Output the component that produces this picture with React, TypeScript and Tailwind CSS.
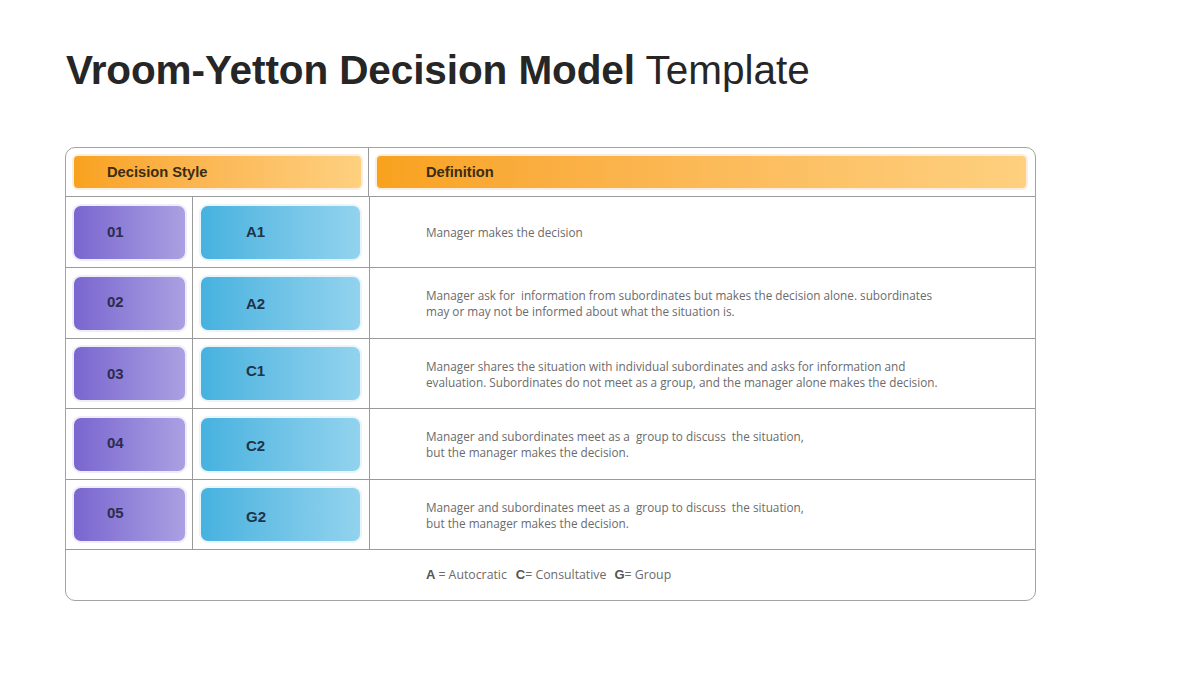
import React from "react";

const rows = [
  { n: "01", c: "A1", nOff: 0, cOff: 0, h: "h-[71px]", text: ["Manager makes the decision"] },
  { n: "02", c: "A2", nOff: -1, cOff: 1, h: "h-[71px]", text: ["Manager ask for  information from subordinates but makes the decision alone. subordinates", "may or may not be informed about what the situation is."] },
  { n: "03", c: "C1", nOff: 1, cOff: -2, h: "h-[70px]", text: ["Manager shares the situation with individual subordinates and asks for information and", "evaluation. Subordinates do not meet as a group, and the manager alone makes the decision."] },
  { n: "04", c: "C2", nOff: -1, cOff: 2, h: "h-[71px]", text: ["Manager and subordinates meet as a  group to discuss  the situation,", "but the manager makes the decision."] },
  { n: "05", c: "G2", nOff: -1, cOff: 3, h: "h-[70px]", text: ["Manager and subordinates meet as a  group to discuss  the situation,", "but the manager makes the decision."] },
];

const offCls: Record<number, string> = {
  [-2]: "-translate-y-[2px]",
  [-1]: "-translate-y-[1px]",
  0: "",
  1: "translate-y-[1px]",
  2: "translate-y-[2px]",
  3: "translate-y-[3px]",
};

export default function App() {
  return (
    <div className="w-[1200px] h-[675px] bg-white relative overflow-hidden" style={{ fontFamily: "'Liberation Sans', Arial, sans-serif" }}>
      <div className="pl-[66px] pt-[46px] h-[147px]">
        <h1 className="text-[40.5px] leading-[48px] text-[#262626]">
          <span className="font-bold tracking-[-0.1px]">Vroom-Yetton Decision Model</span> <span className="font-normal">Template</span>
        </h1>
      </div>
      <div className="ml-[65px] w-[971px] h-[454px] border border-[#a3a3a3] rounded-[10px] overflow-hidden flex flex-col">
        {/* header */}
        <div className="h-[49px] flex border-b border-[#9a9a9a]">
          <div className="w-[303px] border-r border-[#9a9a9a] pl-[6px] pt-[6px]">
            <div className="w-[291px] h-[36px] rounded-[6px] border-[2px] border-[#fbeee0] bg-gradient-to-r from-[#f8a21c] to-[#fed07f] flex items-center pl-[33px] text-[14.7px] font-bold text-[#3b2c14]">
              Decision Style
            </div>
          </div>
          <div className="flex-1 pl-[6px] pt-[6px]">
            <div className="w-[653px] h-[36px] rounded-[6px] border-[2px] border-[#fbeee0] bg-gradient-to-r from-[#f8a21c] to-[#fed07f] flex items-center pl-[49px] text-[14.7px] font-bold text-[#3b2c14]">
              Definition
            </div>
          </div>
        </div>
        {rows.map((r, i) => (
          <div key={i} className={`${r.h} flex border-b border-[#9a9a9a]`}>
            <div className="w-[127px] border-r border-[#9a9a9a] pl-[6px] flex items-center">
              <div className="w-[115px] h-[57px] rounded-[9px] border-[2px] border-[#eeedf9] bg-gradient-to-r from-[#7a66cf] to-[#aba0e2] flex items-center pl-[33px] text-[15px] font-bold text-[#2c2d4e]">
                <span className={offCls[r.nOff]}>{r.n}</span>
              </div>
            </div>
            <div className="w-[177px] border-r border-[#9a9a9a] pl-[6px] flex items-center">
              <div className="w-[163px] h-[57px] rounded-[9px] border-[2px] border-[#eaf4fb] bg-gradient-to-r from-[#45b2df] to-[#92d3ee] flex items-center pl-[45px] text-[15px] font-bold text-[#1f3446]">
                <span className={offCls[r.cOff]}>{r.c}</span>
              </div>
            </div>
            <div className="flex-1 pl-[56px] flex flex-col justify-center text-[11.75px] leading-[16px] text-[#6b6b6b]" style={{ fontFamily: "'Open Sans', sans-serif" }}>
              {r.text.map((t, j) => (
                <div key={j} className="whitespace-pre">{t}</div>
              ))}
            </div>
          </div>
        ))}
        <div className="flex-1 flex items-center pl-[360px] text-[12.3px] text-[#6b6b6b]">
          <span className="font-bold text-[13px] text-[#555]">A</span>
          <span className="ml-[3px]" style={{ fontFamily: "'Open Sans', sans-serif" }}>= Autocratic</span>
          <span className="font-bold text-[13px] text-[#555] ml-[9px]">C</span>
          <span style={{ fontFamily: "'Open Sans', sans-serif" }}>= Consultative</span>
          <span className="font-bold text-[13px] text-[#555] ml-[8px]">G</span>
          <span style={{ fontFamily: "'Open Sans', sans-serif" }}>= Group</span>
        </div>
      </div>
    </div>
  );
}
